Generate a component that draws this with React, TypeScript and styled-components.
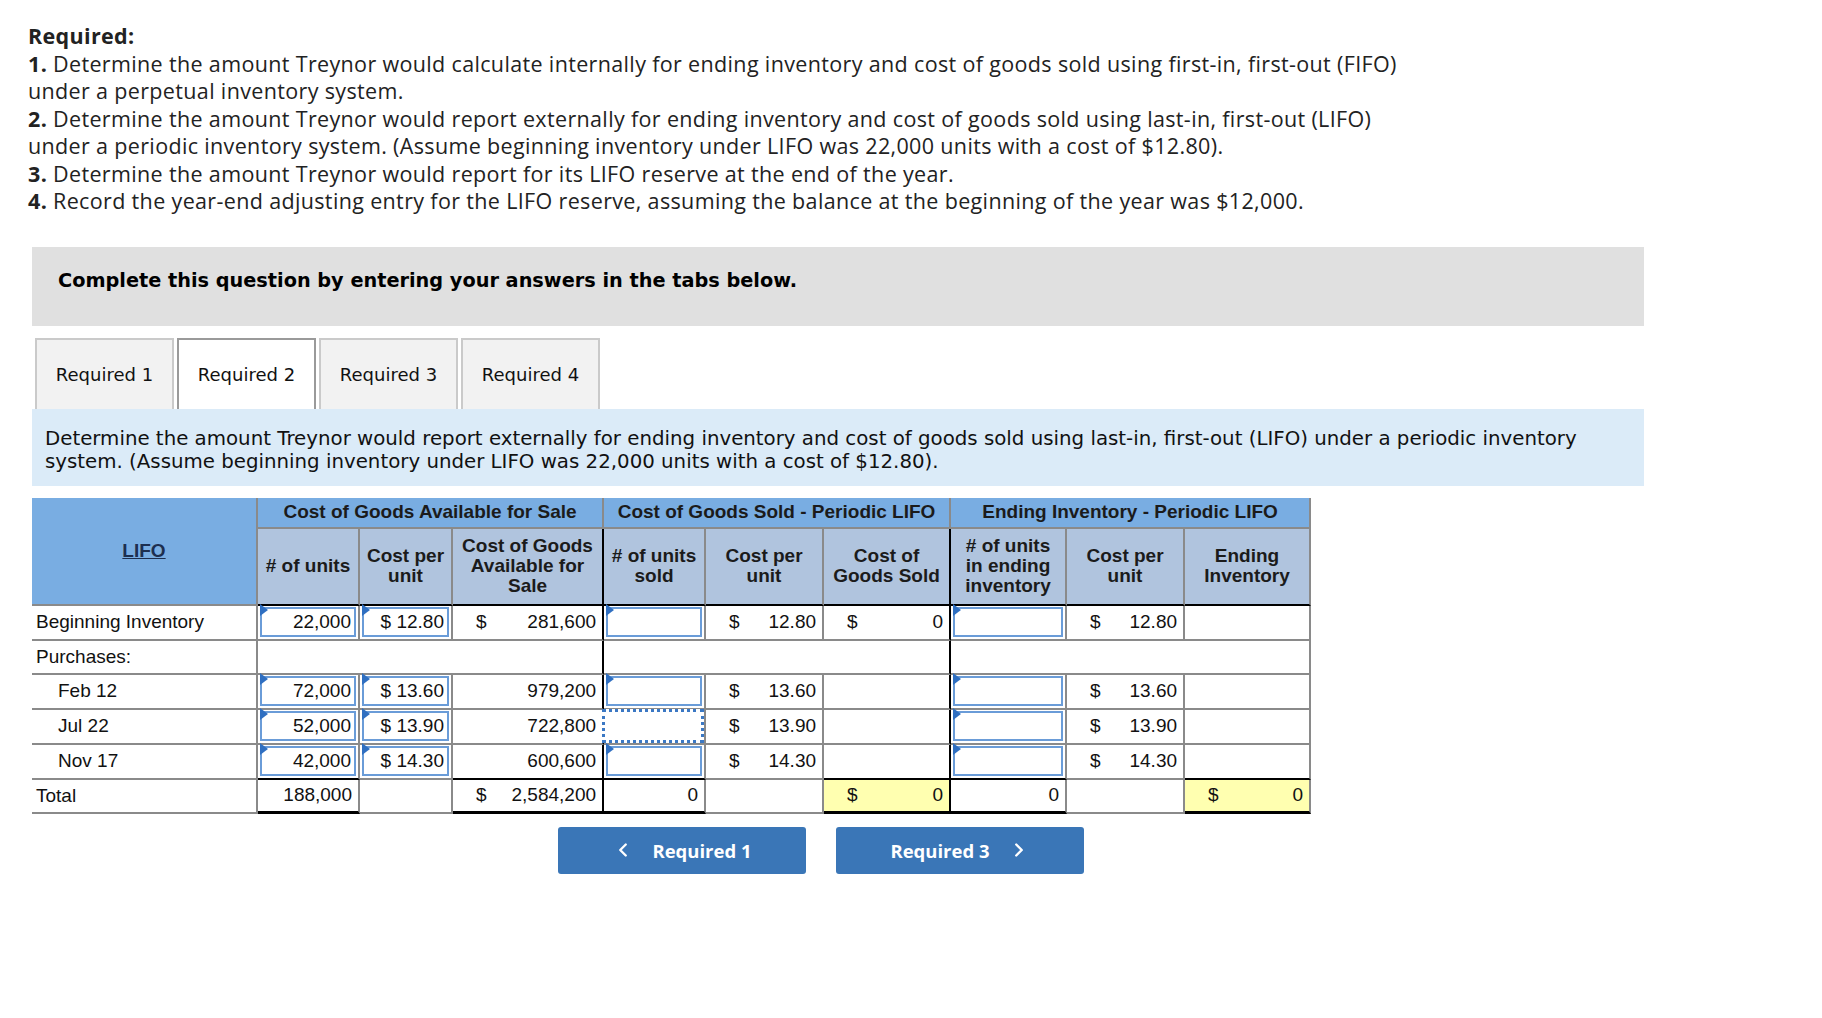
import React from 'react';
import styled, { createGlobalStyle } from 'styled-components';
import { ChevronLeft, ChevronRight } from 'lucide-react';

const GRID = '#8a8a8a';
const BLACK = '#000';

const GlobalStyle = createGlobalStyle`
  body {
    margin: 0;
    background: #fff;
  }
`;

const Page = styled.div`
  padding: 22px 0 60px 28px;
  width: 1619px;
`;

const Question = styled.div`
  font-family: 'Open Sans', 'Lato', sans-serif;
  font-size: 21.5px;
  letter-spacing: 0.35px;
  line-height: 27.5px;
  color: #222;
`;

const Line = styled.div`
  white-space: nowrap;
`;

const Bold = styled.span`
  font-weight: 700;
`;

const Banner = styled.div`
  margin: 32px 0 0 4px;
  width: 1612px;
  height: 79px;
  box-sizing: border-box;
  background: #e0e0e0;
  padding: 22px 0 0 26px;
  font-family: 'DejaVu Sans', Verdana, sans-serif;
  font-weight: 700;
  font-size: 19.3px;
  color: #000;
`;

const Tabs = styled.div`
  display: flex;
  gap: 3px;
  margin: 12px 0 0 7px;
`;

const Tab = styled.div<{ $active?: boolean }>`
  width: 139px;
  height: 71px;
  box-sizing: border-box;
  display: flex;
  align-items: center;
  justify-content: center;
  background: ${(p) => (p.$active ? '#fff' : '#f2f2f2')};
  border: 2px solid ${(p) => (p.$active ? '#9a9a9a' : '#cacaca')};
  border-bottom: none;
  font-family: 'DejaVu Sans', Verdana, sans-serif;
  font-size: 18px;
  color: #111;
`;

const Prompt = styled.div`
  margin-left: 4px;
  width: 1612px;
  height: 77px;
  box-sizing: border-box;
  background: #dbebf8;
  padding: 18px 0 0 13px;
  font-family: 'DejaVu Sans', Verdana, sans-serif;
  font-size: 19.8px;
  line-height: 23.5px;
  color: #111;
`;

const Table = styled.table`
  margin: 12px 0 0 4px;
  border-collapse: separate;
  border-spacing: 0;
  table-layout: fixed;
  width: 1279px;
  font-family: 'Liberation Sans', Arial, sans-serif;
  font-size: 19px;
  color: #111;
`;

const Head1 = styled.tr`
  height: 31px;
`;

const Head2 = styled.tr`
  height: 77px;
`;

const Row = styled.tr`
  height: 34px;
`;

const Th = styled.th<{ $r?: string; $b?: string; $bg?: string; $pad?: number }>`
  box-sizing: border-box;
  padding: 0 ${(p) => p.$pad ?? 3}px;
  background: ${(p) => p.$bg ?? '#b0c4de'};
  border-right: 2px solid ${(p) => p.$r ?? GRID};
  border-bottom: 2px solid ${(p) => p.$b ?? GRID};
  font-weight: 700;
  line-height: 20px;
  text-align: center;
  vertical-align: middle;
  color: #1b1b1b;
`;

const LifoLink = styled.span`
  text-decoration: underline;
  color: #1d2f50;
`;

const Td = styled.td<{ $r?: string; $b?: string; $bw?: number; $bg?: string; $indent?: boolean; $align?: string }>`
  box-sizing: border-box;
  padding: ${(p) => (p.$indent ? '0 6px 0 26px' : '0 6px 0 4px')};
  background: ${(p) => p.$bg ?? '#fff'};
  border-right: 2px solid ${(p) => p.$r ?? GRID};
  border-bottom: ${(p) => p.$bw ?? 2}px solid ${(p) => p.$b ?? GRID};
  text-align: ${(p) => p.$align ?? 'right'};
  vertical-align: middle;
  white-space: nowrap;
`;

const InputTd = styled.td<{ $r?: string; $b?: string }>`
  box-sizing: border-box;
  padding: 1px 2px 2px 2px;
  height: 34px;
  border-right: 2px solid ${(p) => p.$r ?? GRID};
  border-bottom: 2px solid ${(p) => p.$b ?? GRID};
`;

const InputBox = styled.div<{ $dotted?: boolean }>`
  position: relative;
  box-sizing: border-box;
  border: ${(p) => (p.$dotted ? '3px dotted #3b78c4' : '2px solid #6a9cd8')};
  margin: ${(p) => (p.$dotted ? '-2px -2px -2px -4px' : '0')};
  height: ${(p) => (p.$dotted ? '34px' : '30px')};
  padding-right: 3px;
  display: flex;
  align-items: center;
  justify-content: flex-end;
  background: #fff;

  ${(p) =>
    p.$dotted
      ? ''
      : `&::before {
    content: '';
    position: absolute;
    top: -2px;
    left: -2px;
    border-left: 8px solid #2f6fc1;
    border-top: 6px solid transparent;
    border-bottom: 6px solid transparent;
    transform: translateY(-3px);
  }`}
`;

const Money = styled.div`
  display: flex;
  justify-content: space-between;
  padding-left: 19px;
`;

const Nav = styled.div`
  display: flex;
  gap: 30px;
  margin: 13px 0 0 530px;
`;

const NavButton = styled.button`
  width: 248px;
  height: 47px;
  border: none;
  border-radius: 3px;
  background: #3a76b7;
  color: #fff;
  font-family: 'Open Sans', 'Lato', sans-serif;
  font-weight: 700;
  font-size: 18.5px;
  display: flex;
  align-items: center;
  justify-content: center;
  gap: 18px;
  cursor: pointer;
`;

type Entry = {
  label: string;
  units: string;
  cost: string;
  cgas: string;
  first?: boolean;
  focus?: boolean;
  last?: boolean;
};

const entries: Entry[] = [
  { label: 'Feb 12', units: '72,000', cost: '13.60', cgas: '979,200' },
  { label: 'Jul 22', units: '52,000', cost: '13.90', cgas: '722,800', focus: true },
  { label: 'Nov 17', units: '42,000', cost: '14.30', cgas: '600,600', last: true },
];

const DataRow = ({ e, indent }: { e: Entry; indent?: boolean }) => {
  const b = e.last ? BLACK : GRID;
  return (
    <Row>
      <Td $align="left" $indent={indent}>
        {e.label}
      </Td>
      <InputTd $b={b}>
        <InputBox>{e.units}</InputBox>
      </InputTd>
      <InputTd>
        <InputBox>$ {e.cost}</InputBox>
      </InputTd>
      <Td $r={BLACK} $b={b}>
        {e.first ? (
          <Money>
            <span>$</span>
            <span>{e.cgas}</span>
          </Money>
        ) : (
          e.cgas
        )}
      </Td>
      <InputTd $b={b}>
        <InputBox $dotted={e.focus} />
      </InputTd>
      <Td>
        <Money>
          <span>$</span>
          <span>{e.cost}</span>
        </Money>
      </Td>
      <Td $r={BLACK} $b={b}>
        {e.first && (
          <Money>
            <span>$</span>
            <span>0</span>
          </Money>
        )}
      </Td>
      <InputTd $b={b}>
        <InputBox />
      </InputTd>
      <Td>
        <Money>
          <span>$</span>
          <span>{e.cost}</span>
        </Money>
      </Td>
      <Td $b={b} />
    </Row>
  );
};

const App = () => {
  return (
    <Page>
      <GlobalStyle />
      <Question>
        <Line>
          <Bold>Required:</Bold>
        </Line>
        <Line>
          <Bold>1.</Bold> Determine the amount Treynor would calculate internally for ending inventory and cost of goods sold using first-in, first-out (FIFO)
        </Line>
        <Line>under a perpetual inventory system.</Line>
        <Line>
          <Bold>2.</Bold> Determine the amount Treynor would report externally for ending inventory and cost of goods sold using last-in, first-out (LIFO)
        </Line>
        <Line>under a periodic inventory system. (Assume beginning inventory under LIFO was 22,000 units with a cost of $12.80).</Line>
        <Line>
          <Bold>3.</Bold> Determine the amount Treynor would report for its LIFO reserve at the end of the year.
        </Line>
        <Line>
          <Bold>4.</Bold> Record the year-end adjusting entry for the LIFO reserve, assuming the balance at the beginning of the year was $12,000.
        </Line>
      </Question>

      <Banner>Complete this question by entering your answers in the tabs below.</Banner>

      <Tabs>
        <Tab>Required 1</Tab>
        <Tab $active>Required 2</Tab>
        <Tab>Required 3</Tab>
        <Tab>Required 4</Tab>
      </Tabs>

      <Prompt>
        Determine the amount Treynor would report externally for ending inventory and cost of goods sold using last-in, first-out (LIFO) under a periodic inventory system. (Assume beginning inventory under LIFO was 22,000 units with a cost of $12.80).
      </Prompt>

      <Table>
        <colgroup>
          <col style={{ width: 226 }} />
          <col style={{ width: 102 }} />
          <col style={{ width: 93 }} />
          <col style={{ width: 151 }} />
          <col style={{ width: 102 }} />
          <col style={{ width: 118 }} />
          <col style={{ width: 127 }} />
          <col style={{ width: 116 }} />
          <col style={{ width: 118 }} />
          <col style={{ width: 126 }} />
        </colgroup>
        <thead>
          <Head1>
            <Th rowSpan={2} $bg="#79ade2">
              <LifoLink>LIFO</LifoLink>
            </Th>
            <Th colSpan={3} $bg="#79ade2">
              Cost of Goods Available for Sale
            </Th>
            <Th colSpan={3} $bg="#79ade2">
              Cost of Goods Sold - Periodic LIFO
            </Th>
            <Th colSpan={3} $bg="#79ade2">
              Ending Inventory - Periodic LIFO
            </Th>
          </Head1>
          <Head2>
            <Th $b={BLACK}># of units</Th>
            <Th $b={BLACK}>Cost per unit</Th>
            <Th $b={BLACK} $r={BLACK}>
              Cost of Goods Available for Sale
            </Th>
            <Th $b={BLACK}># of units sold</Th>
            <Th $b={BLACK}>Cost per unit</Th>
            <Th $b={BLACK} $r={BLACK}>
              Cost of Goods Sold
            </Th>
            <Th $b={BLACK} $pad={6}>
              # of units in ending inventory
            </Th>
            <Th $b={BLACK}>Cost per unit</Th>
            <Th $b={BLACK}>Ending Inventory</Th>
          </Head2>
        </thead>
        <tbody>
          <DataRow e={{ label: 'Beginning Inventory', units: '22,000', cost: '12.80', cgas: '281,600', first: true }} />
          <Row>
            <Td $align="left">Purchases:</Td>
            <Td colSpan={3} $r={BLACK} />
            <Td colSpan={3} $r={BLACK} />
            <Td colSpan={3} />
          </Row>
          {entries.map((e) => (
            <DataRow key={e.label} e={e} indent />
          ))}
          <Row>
            <Td $align="left">Total</Td>
            <Td $b={BLACK} $bw={3}>
              188,000
            </Td>
            <Td />
            <Td $r={BLACK} $b={BLACK} $bw={3}>
              <Money>
                <span>$</span>
                <span>2,584,200</span>
              </Money>
            </Td>
            <Td $b={BLACK} $bw={3}>
              0
            </Td>
            <Td />
            <Td $r={BLACK} $b={BLACK} $bw={3} $bg="#ffffb0">
              <Money>
                <span>$</span>
                <span>0</span>
              </Money>
            </Td>
            <Td $b={BLACK} $bw={3}>
              0
            </Td>
            <Td />
            <Td $b={BLACK} $bw={3} $bg="#ffffb0">
              <Money>
                <span>$</span>
                <span>0</span>
              </Money>
            </Td>
          </Row>
        </tbody>
      </Table>

      <Nav>
        <NavButton>
          <ChevronLeft size={22} strokeWidth={2.6} />
          <span>Required 1</span>
        </NavButton>
        <NavButton>
          <span>Required 3</span>
          <ChevronRight size={22} strokeWidth={2.6} />
        </NavButton>
      </Nav>
    </Page>
  );
};

export default App;
